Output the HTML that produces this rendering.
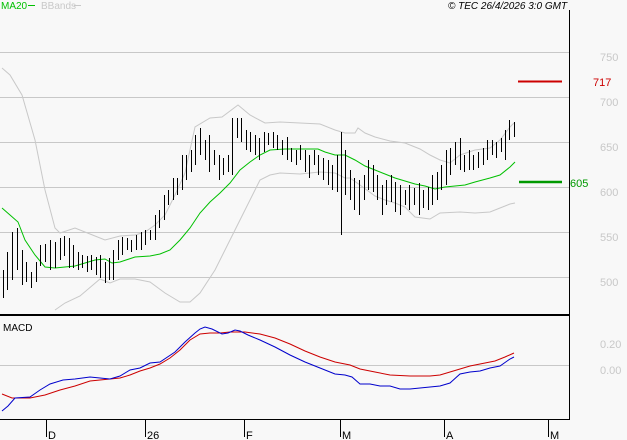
<!DOCTYPE html>
<html><head><meta charset="utf-8"><style>
html,body{margin:0;padding:0;background:#f8f8f8;}
svg{display:block;}
text{font-family:"Liberation Sans",sans-serif;}
</style></head><body>
<svg width="627" height="440" viewBox="0 0 627 440" xmlns="http://www.w3.org/2000/svg">
<rect width="627" height="440" fill="#f8f8f8"/>
<g stroke="#c8c8c8" stroke-width="1">
<line x1="0" y1="52.5" x2="569" y2="52.5"/><line x1="0" y1="97.5" x2="569" y2="97.5"/>
<line x1="0" y1="142.5" x2="569" y2="142.5"/><line x1="0" y1="187.5" x2="569" y2="187.5"/>
<line x1="0" y1="232.5" x2="569" y2="232.5"/><line x1="0" y1="277.5" x2="569" y2="277.5"/>
<line x1="0" y1="365.5" x2="569" y2="365.5"/>
</g>
<g fill="none" stroke="#c8c8c8" stroke-width="1">
<polyline points="2,68 10,75 22,95 35,140 45,190 55,228 60,233 75,228 90,234 105,240 120,236 135,235 145,232 155,225 165,215 175,195 185,173 195,127 210,118 222,117 238,105 250,115 265,123 280,122 300,123 320,124 335,130 345,133 355,133 358,128 365,133 375,137 390,141 405,143 420,149 430,155 440,160 450,163 460,155 475,150 490,148 500,140 510,127 514,123"/>
<polyline points="55,310 65,303 80,296 100,279 110,283 120,279 135,279 150,282 165,293 180,302 190,302 200,293 215,270 230,240 245,210 260,180 270,175 280,173 300,174 320,172 335,173 345,178 350,178 360,185 375,196 385,200 395,203 405,207 415,217 430,219 440,213 460,212 475,213 490,212 500,208 510,204 515,203"/>
</g>
<polyline fill="none" stroke="#00c000" stroke-width="1" points="2,208 10,215 18,222 25,240 35,255 45,267 55,268 65,267 75,266 85,263 95,260 105,259 112,263 120,262 135,257 150,256 160,254 170,250 180,240 190,228 200,213 210,202 220,193 230,183 240,170 250,162 260,155 270,150 285,149 300,149 318,149 325,152 335,155 345,155 355,160 365,166 375,170 385,174 395,178 405,181 415,184 425,186 435,189 445,187 455,186 465,185 475,182 490,178 500,175 510,167 515,162"/>
<path transform="translate(0.5,0)" fill="none" stroke="#000" stroke-width="1" shape-rendering="crispEdges" d="M3 270V298M7 252V290M12 232V280M17 228V270M22 250V285M26 262V282M31 272V288M36 262V282M40 245V266M45 244V262M50 240V270M55 242V268M60 238V260M64 236V256M69 238V268M73 245V268M78 252V270M82 255V268M87 256V272M91 255V270M96 257V275M100 255V278M105 262V283M109 258V280M113 250V280M118 240V260M122 237V255M127 238V250M131 240V252M136 235V250M141 232V250M145 230V245M150 230V240M155 215V240M159 210V228M164 195V220M168 190V205M173 178V200M177 178V195M182 155V190M186 155V180M191 150V172M195 135V165M200 128V155M205 140V160M209 135V172M214 150V165M219 155V180M223 158V175M228 155V172M232 118V175M237 118V138M241 118V142M246 130V150M250 132V152M255 135V155M259 138V160M264 132V152M268 133V145M273 132V148M277 135V150M282 140V155M287 137V160M291 148V162M296 150V165M300 145V160M305 150V172M309 155V178M314 150V165M318 155V175M323 158V180M328 160V185M332 165V190M337 155V192M341 132V235M345 150V195M350 170V200M354 178V210M359 180V215M364 175V200M368 160V190M373 165V192M377 175V200M382 185V215M386 180V205M391 175V202M395 182V212M400 185V215M405 190V205M409 185V210M414 188V205M419 183V215M423 190V208M428 187V210M432 175V205M437 172V200M441 165V190M446 150V185M450 148V175M455 142V165M460 138V170M464 155V172M469 150V170M473 155V170M478 152V168M483 148V165M487 140V160M492 140V155M496 142V158M501 138V152M505 130V160M509 120V140M514 122V137"/>
<line x1="518" y1="81.5" x2="562" y2="81.5" stroke="#cc0000" stroke-width="2"/>
<text x="593" y="86" font-size="11" fill="#cc0000">717</text>
<line x1="519" y1="182" x2="562" y2="182" stroke="#009900" stroke-width="2.5"/>
<text x="570" y="187" font-size="11" fill="#009900">605</text>
<g font-size="11" fill="#c8c8c8">
<text x="600" y="61">750</text><text x="600" y="106">700</text><text x="600" y="151">650</text>
<text x="600" y="196">600</text><text x="600" y="241">550</text><text x="600" y="286">500</text>
<text x="600" y="348">0.20</text><text x="600" y="374">0.00</text>
</g>
<text x="1" y="9" font-size="10" fill="#00c000">MA20</text>
<line x1="28" y1="5.5" x2="35" y2="5.5" stroke="#00c000"/>
<text x="41" y="9" font-size="10" fill="#c8c8c8">BBands</text>
<line x1="74" y1="5.5" x2="81" y2="5.5" stroke="#c8c8c8"/>
<text x="448" y="9" font-size="10" font-style="italic" fill="#000">© TEC 26/4/2026 3:0 GMT</text>
<text x="3" y="331" font-size="10" fill="#000">MACD</text>
<polyline fill="none" stroke="#cc0000" stroke-width="1" points="2,394 12,398 30,398 45,395 60,390 75,386 90,381 110,379 120,378 130,375 140,371 150,368 160,364 170,358 180,350 190,340 200,334 210,333 220,333 230,332 245,332 260,334 275,338 290,344 305,351 320,357 335,362 350,365 360,369 375,372 390,375 410,376 430,376 440,375 450,372 460,369 470,366 480,364 495,361 505,357 514,353"/>
<polyline fill="none" stroke="#0000cc" stroke-width="1" points="2,411 8,406 15,398 30,397 40,390 50,384 63,380 75,379 90,377 110,379 120,376 130,370 140,368 150,363 160,362 175,352 185,342 195,333 200,329 205,327 212,329 222,334 228,333 235,330 240,331 248,335 260,340 275,347 290,355 305,362 320,368 335,374 345,375 352,377 360,384 370,384 380,386 390,386 400,389 410,389 420,388 430,387 440,386 450,383 460,374 470,372 480,371 490,368 500,366 510,359 514,357"/>
<line x1="569.5" y1="10" x2="569.5" y2="420" stroke="#000" stroke-width="1"/>
<line x1="0" y1="315" x2="570" y2="315" stroke="#000" stroke-width="2"/>
<line x1="0" y1="419.5" x2="570" y2="419.5" stroke="#000" stroke-width="1"/>
<g stroke="#000" stroke-width="1">
<line x1="46.5" y1="420" x2="46.5" y2="437"/><line x1="145.5" y1="420" x2="145.5" y2="437"/>
<line x1="244.5" y1="420" x2="244.5" y2="437"/><line x1="340.5" y1="420" x2="340.5" y2="437"/>
<line x1="444.5" y1="420" x2="444.5" y2="437"/><line x1="548.5" y1="420" x2="548.5" y2="437"/>
</g>
<g font-size="11" fill="#000">
<text x="48" y="439">D</text><text x="147" y="439">26</text><text x="246" y="439">F</text>
<text x="342" y="439">M</text><text x="446" y="439">A</text><text x="550" y="439">M</text>
</g>
</svg>
</body></html>
